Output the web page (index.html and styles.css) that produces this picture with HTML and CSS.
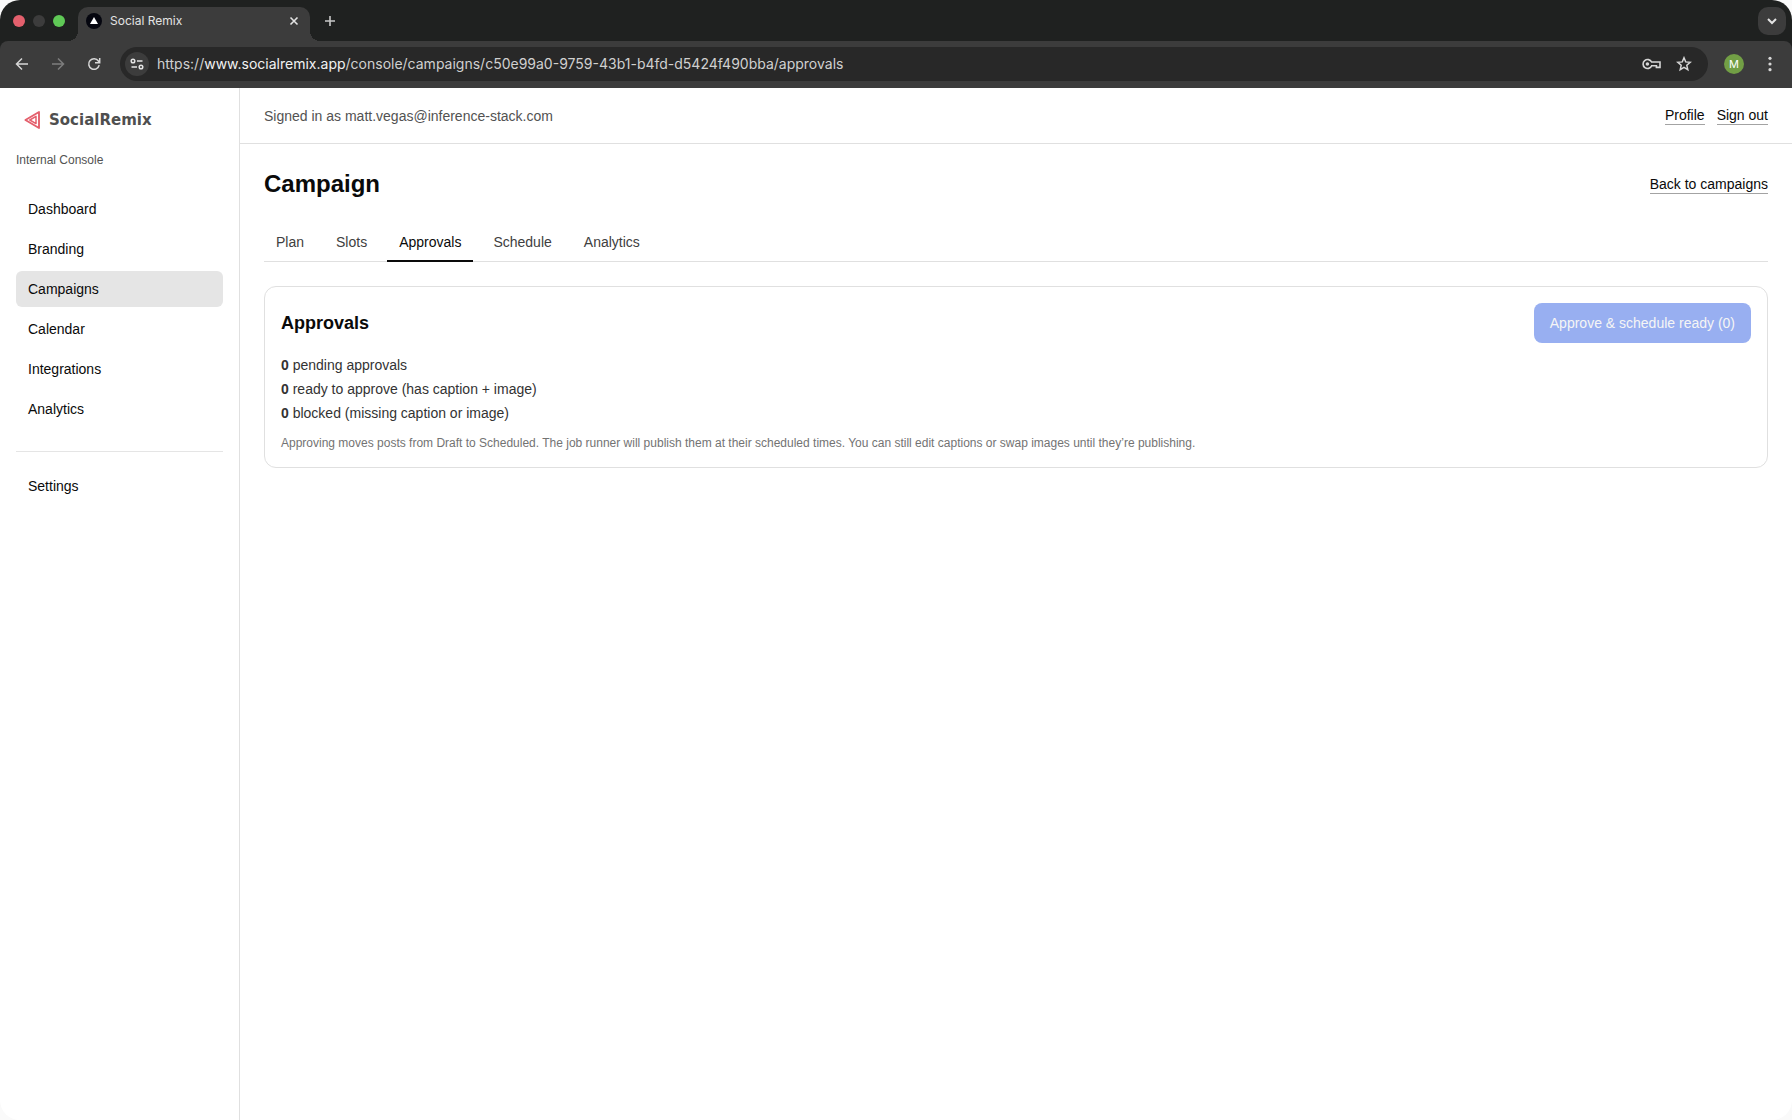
FILE: index.html
```html
<!DOCTYPE html>
<html lang="en">
<head>
    <meta charset="UTF-8">
    <meta name="viewport" content="width=device-width, initial-scale=1.0">
    <title>Social Remix</title>
    <link rel="stylesheet" href="styles.css">
</head>
<body>
    <div class="window">
        <div class="chrome">
            <div class="tab-strip">
                <div class="lights">
                    <span class="light red"></span>
                    <span class="light grey"></span>
                    <span class="light green"></span>
                </div>
                <div class="browser-tab">
                    <svg class="favicon" width="16" height="16" viewBox="0 0 16 16"><circle cx="8" cy="8" r="8" fill="#05060f"/><path d="M8 4l4 7H4z" fill="#fff"/></svg>
                    <span class="tab-title">Social Remix</span>
                    <button class="icon-button" aria-label="Close tab">
                        <svg width="10" height="10" viewBox="0 0 10 10" stroke="#e3e3e3" stroke-width="1.6"><path d="M1.5 1.5l7 7M8.5 1.5l-7 7"/></svg>
                    </button>
                </div>
                <button class="icon-button new-tab" aria-label="New tab">
                    <svg width="12" height="12" viewBox="0 0 12 12" stroke="#c7c7c7" stroke-width="1.6"><path d="M6 1v10M1 6h10"/></svg>
                </button>
                <button class="icon-button tab-search" aria-label="Search tabs">
                    <svg width="10" height="8" viewBox="0 0 10 8" fill="none" stroke="#e3e3e3" stroke-width="2"><path d="M1 2l4 4 4-4"/></svg>
                </button>
            </div>

            <div class="toolbar">
                <button class="icon-button nav-button" aria-label="Back">
                    <svg width="14" height="14" viewBox="0 0 14 14" fill="none" stroke="#d6d6d6" stroke-width="1.5"><path d="M13 7H2M7 1.5L1.5 7 7 12.5"/></svg>
                </button>
                <button class="icon-button nav-button" aria-label="Forward">
                    <svg width="14" height="14" viewBox="0 0 14 14" fill="none" stroke="#7d7d7d" stroke-width="1.5"><path d="M1 7h11M7 1.5L12.5 7 7 12.5"/></svg>
                </button>
                <button class="icon-button nav-button" aria-label="Reload">
                    <svg width="14" height="14" viewBox="0 0 14 14" fill="none" stroke="#d6d6d6" stroke-width="1.5"><path d="M12.2 8.2A5.3 5.3 0 1 1 11.4 4L12.4 5.2"/><path d="M12.7 1v4.8H8"/></svg>
                </button>
                <div class="address-bar">
                    <button class="icon-button site-info" aria-label="Site information">
                        <svg width="14" height="12" viewBox="0 0 14 12" fill="none" stroke="#e3e3e3" stroke-width="1.5"><circle cx="3" cy="3" r="1.8"/><path d="M7 3h5.5M1.5 9H7"/><circle cx="11" cy="9" r="1.8"/></svg>
                    </button>
                    <span class="url">https://<span class="url-host">www.socialremix.app</span>/console/campaigns/c50e99a0-9759-43b1-b4fd-d5424f490bba/approvals</span>
                    <button class="icon-button" aria-label="Passwords">
                        <svg width="19" height="12" viewBox="0 0 19 12" fill="none" stroke="#d6d6d6" stroke-width="1.6"><path d="M9.6 4H18v5.4h-3.6V7.8H9.7A4.5 4.5 0 1 1 9.6 4z"/><circle cx="5.4" cy="6" r="1.8" fill="#d6d6d6" stroke="none"/></svg>
                    </button>
                    <button class="icon-button" aria-label="Bookmark">
                        <svg width="16" height="16" viewBox="0 0 16 16" fill="none" stroke="#d6d6d6" stroke-width="1.5"><path d="M8 1.8l1.7 4.1 4.5.4-3.4 3 1 4.4L8 11.4l-3.8 2.3 1-4.4-3.4-3 4.5-.4z"/></svg>
                    </button>
                </div>
                <button class="avatar">M</button>
                <button class="icon-button menu-button" aria-label="Menu">
                    <svg width="4" height="16" viewBox="0 0 4 16" fill="#d6d6d6"><circle cx="2" cy="2.3" r="1.6"/><circle cx="2" cy="8" r="1.6"/><circle cx="2" cy="13.7" r="1.6"/></svg>
                </button>
            </div>
        </div>

        <div class="app">
            <aside class="sidebar">
                <div class="logo">
                    <svg width="17" height="20" viewBox="0 0 17 20" fill="none" stroke="#e4606d" stroke-linejoin="round"><path d="M15 2v16L1.4 10z" stroke-width="1.9"/><path d="M12 6.4v7.2L5.8 10z" stroke-width="1.5"/></svg>
                    <span class="logo-text">SocialRemix</span>
                </div>
                <p class="console-name">Internal Console</p>
                <nav class="nav">
                    <a class="nav-link" href="#">Dashboard</a>
                    <a class="nav-link" href="#">Branding</a>
                    <a class="nav-link active" href="#">Campaigns</a>
                    <a class="nav-link" href="#">Calendar</a>
                    <a class="nav-link" href="#">Integrations</a>
                    <a class="nav-link" href="#">Analytics</a>
                </nav>
                <nav class="nav nav-bottom">
                    <a class="nav-link" href="#">Settings</a>
                </nav>
            </aside>

            <div class="main">
                <header class="topbar">
                    <span>Signed in as matt.vegas@inference-stack.com</span>
                    <div class="account-links">
                        <a class="link" href="#">Profile</a>
                        <a class="link" href="#">Sign out</a>
                    </div>
                </header>

                <main class="content">
                    <div class="page-header">
                        <h1>Campaign</h1>
                        <a class="link" href="#">Back to campaigns</a>
                    </div>

                    <nav class="tabs">
                        <a class="tab" href="#">Plan</a>
                        <a class="tab" href="#">Slots</a>
                        <a class="tab active" href="#">Approvals</a>
                        <a class="tab" href="#">Schedule</a>
                        <a class="tab" href="#">Analytics</a>
                    </nav>

                    <section class="card">
                        <div class="card-header">
                            <h2>Approvals</h2>
                            <button class="approve-button" disabled>Approve &amp; schedule ready (0)</button>
                        </div>
                        <div class="counts">
                            <div><strong>0</strong> pending approvals</div>
                            <div><strong>0</strong> ready to approve (has caption + image)</div>
                            <div><strong>0</strong> blocked (missing caption or image)</div>
                        </div>
                        <p class="hint">Approving moves posts from Draft to Scheduled. The job runner will publish them at their scheduled times. You can still edit captions or swap images until they’re publishing.</p>
                    </section>
                </main>
            </div>
        </div>
    </div>
</body>
</html>
```

FILE: styles.css
```css
* {
    box-sizing: border-box;
}
body {
    margin: 0;
    background: #fafafa;
    color: #0a0a0a;
    font-family: "Liberation Sans", Arial, sans-serif;
    font-size: 14px;
    line-height: 20px;
}
h1, h2, p {
    margin: 0;
}
a {
    color: inherit;
    text-decoration: none;
}
button {
    border: none;
    font-family: inherit;
}
svg {
    display: block;
}
.window {
    display: flex;
    flex-direction: column;
    min-height: 100vh;
    border-radius: 20px;
    overflow: hidden;
    background: #fff;
}

/* Browser chrome */
.chrome {
    background: #1f2120;
    font-family: Inter, sans-serif;
}
.tab-strip {
    display: flex;
    align-items: center;
    height: 41px;
    padding: 0 6px 0 13px;
}
.lights {
    display: flex;
    gap: 8px;
}
.light {
    width: 12px;
    height: 12px;
    border-radius: 50%;
}
.red {
    background: #e4606d;
}
.grey {
    background: #3c3c3c;
}
.green {
    background: #5fc956;
}
.icon-button {
    display: flex;
    align-items: center;
    justify-content: center;
    padding: 0;
    background: none;
}
.browser-tab {
    position: relative;
    display: flex;
    align-items: center;
    gap: 8px;
    width: 232px;
    height: 34px;
    margin: 7px 0 0 13px;
    padding: 0 11px 6px 8px;
    border-radius: 10px 10px 0 0;
    background: #3c3c3c;
    color: #e3e3e3;
    font-size: 12px;
}
.browser-tab::before,
.browser-tab::after {
    content: "";
    position: absolute;
    bottom: 0;
    width: 10px;
    height: 10px;
}
.browser-tab::before {
    right: 100%;
    background: radial-gradient(circle at 0 0, #1f2120 10px, #3c3c3c 10px);
}
.browser-tab::after {
    left: 100%;
    background: radial-gradient(circle at 100% 0, #1f2120 10px, #3c3c3c 10px);
}
.tab-title {
    flex: 1;
}
.new-tab {
    margin-left: 14px;
}
.tab-search {
    width: 28px;
    height: 28px;
    margin-left: auto;
    border-radius: 10px;
    background: #3c3c3c;
}
.toolbar {
    display: flex;
    align-items: center;
    height: 47px;
    padding: 0 20px 1px 15px;
    border-radius: 8px 8px 0 0;
    background: #3c3c3c;
}
.nav-button {
    width: 14px;
    margin-right: 22px;
}
.address-bar {
    display: flex;
    flex: 1;
    align-items: center;
    gap: 15px;
    height: 34px;
    margin-left: -3px;
    padding: 0 16px 0 5px;
    border-radius: 17px;
    background: #282828;
    color: #e3e3e3;
}
.site-info {
    width: 24px;
    height: 24px;
    margin-right: -7px;
    border-radius: 50%;
    background: #3c3c3c;
}
.url {
    flex: 1;
    color: #d0d0d0;
    font-size: 14px;
}
.url-host {
    color: #f2f2f2;
}
.avatar {
    width: 20px;
    height: 20px;
    margin-left: 16px;
    padding: 0;
    border-radius: 50%;
    background: #729f45;
    color: #fff;
    font-size: 11px;
}
.menu-button {
    margin-left: 24px;
}

/* App */
.app {
    display: flex;
    flex: 1;
}
.sidebar {
    width: 240px;
    padding: 16px;
    border-right: 1px solid #e0e0e0;
}
.logo {
    display: flex;
    align-items: center;
    gap: 8px;
    height: 32px;
    padding-left: 8px;
}
.logo-text {
    color: #4f4f4f;
    font-family: "DejaVu Sans", sans-serif;
    font-size: 15px;
    font-weight: bold;
}
.console-name {
    margin: 14px 0 21px;
    color: #525252;
    font-size: 12px;
}
.nav {
    display: flex;
    flex-direction: column;
    gap: 4px;
}
.nav-link {
    padding: 8px 12px;
    border-radius: 6px;
}
.nav-link.active {
    background: #e5e5e5;
}
.nav-bottom {
    margin-top: 24px;
    padding-top: 16px;
    border-top: 1px solid #e5e5e5;
}
.main {
    flex: 1;
}
.topbar {
    display: flex;
    align-items: center;
    justify-content: space-between;
    height: 56px;
    padding: 0 24px;
    border-bottom: 1px solid #e0e0e0;
    color: #525252;
}
.account-links {
    display: flex;
    gap: 12px;
}
.link {
    border-bottom: 1px solid #a3a3a3;
    color: #0a0a0a;
    line-height: 18px;
}
.content {
    padding: 24px;
}
.page-header {
    display: flex;
    align-items: center;
    justify-content: space-between;
}
h1 {
    font-size: 24px;
    line-height: 32px;
}
.tabs {
    display: flex;
    gap: 8px;
    margin-top: 24px;
    border-bottom: 1px solid #e0e0e0;
}
.tab {
    margin-bottom: -1px;
    padding: 8px 12px;
    border-bottom: 2px solid transparent;
    color: #404040;
}
.tab.active {
    border-color: #0a0a0a;
    color: #0a0a0a;
}
.card {
    margin-top: 24px;
    padding: 16px;
    border: 1px solid #e0e0e0;
    border-radius: 12px;
}
.card-header {
    display: flex;
    align-items: center;
    justify-content: space-between;
}
h2 {
    font-size: 18px;
    line-height: 28px;
}
.approve-button {
    height: 40px;
    padding: 0 16px;
    border-radius: 8px;
    background: #98aff1;
    color: #f5f5f5;
    font-size: 14px;
}
.counts {
    margin-top: 10px;
    color: #333;
    line-height: 24px;
}
.hint {
    margin-top: 10px;
    color: #737373;
    font-size: 12px;
    line-height: 16px;
}
```
